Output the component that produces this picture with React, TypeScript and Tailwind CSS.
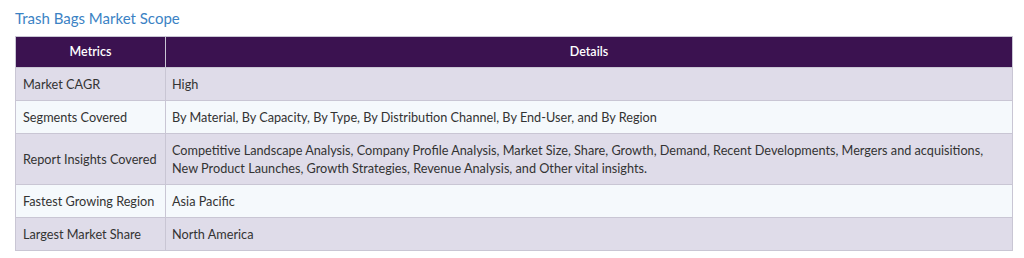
import React from "react";

const rows: [string, string][] = [
  ["Market CAGR", "High"],
  ["Segments Covered", "By Material, By Capacity, By Type, By Distribution Channel, By End-User, and By Region"],
  [
    "Report Insights Covered",
    "Competitive Landscape Analysis, Company Profile Analysis, Market Size, Share, Growth, Demand, Recent Developments, Mergers and acquisitions, New Product Launches, Growth Strategies, Revenue Analysis, and Other vital insights.",
  ],
  ["Fastest Growing Region", "Asia Pacific"],
  ["Largest Market Share", "North America"],
];

export default function App() {
  return (
    <div className="w-[1024px] h-[258px] bg-white px-[15px] pt-[9px] font-['Lato','Open_Sans',sans-serif]">
      <h2 className="text-[15px] leading-[18px] text-[#3b82c4] mb-[9px]">Trash Bags Market Scope</h2>
      <table className="w-[998px] table-fixed border-collapse text-[12.7px] text-[#333]">
        <thead>
          <tr className="bg-[#3b1250] text-white h-[31px]">
            <th className="w-[150px] border border-[#c9c6d4] font-semibold text-center text-[12.5px]">Metrics</th>
            <th className="border border-[#c9c6d4] font-semibold text-center text-[12.5px]">Details</th>
          </tr>
        </thead>
        <tbody>
          {rows.map(([m, d], i) => (
            <tr key={m} className={i % 2 === 0 ? "bg-[#dfdce9]" : "bg-[#f5f9fc]"}>
              <td className="border border-[#c9c6d4] px-[7px] py-[7px] leading-[18px] align-middle whitespace-nowrap">{m}</td>
              <td className="border border-[#c9c6d4] px-[6px] py-[7px] leading-[18px] align-middle">{d}</td>
            </tr>
          ))}
        </tbody>
      </table>
    </div>
  );
}
